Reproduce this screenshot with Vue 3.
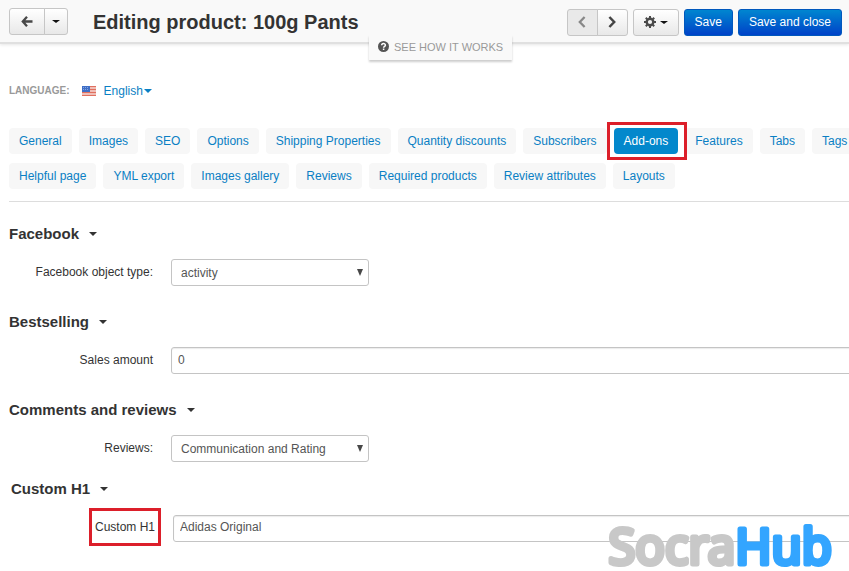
<template>
  <div class="page">
    <header class="actions-bar">
      <div class="btn-group">
        <button type="button" class="btn btn-back" aria-label="Back">
          <svg width="12" height="11" viewBox="0 0 12 11">
            <path d="M6 .8 L1.8 5.5 L6 10.2 M2 5.5 H11.5" fill="none" stroke="#484848" stroke-width="2.3" />
          </svg>
        </button>
        <button type="button" class="btn btn-toggle" aria-label="History"><span class="caret small"></span></button>
      </div>

      <h1 class="title">Editing product: 100g Pants</h1>

      <div class="buttons">
        <div class="btn-group">
          <button type="button" class="btn btn-nav" aria-label="Previous" disabled>
            <svg width="8" height="12" viewBox="0 0 8 12">
              <path d="M6.6 1 L1.8 6 L6.6 11" fill="none" stroke="#888" stroke-width="2.3" />
            </svg>
          </button>
          <button type="button" class="btn btn-nav" aria-label="Next">
            <svg width="8" height="12" viewBox="0 0 8 12">
              <path d="M1.4 1 L6.2 6 L1.4 11" fill="none" stroke="#444" stroke-width="2.5" />
            </svg>
          </button>
        </div>
        <button type="button" class="btn btn-gear" aria-label="Tools">
          <svg width="12" height="12" viewBox="0 0 12 12">
            <circle cx="6" cy="6" r="3.3" fill="none" stroke="#4a4a4a" stroke-width="2.4" />
            <path
              d="M6 0 V2 M6 10 V12 M0 6 H2 M10 6 H12 M1.8 1.8 L3.2 3.2 M8.8 8.8 L10.2 10.2 M10.2 1.8 L8.8 3.2 M3.2 8.8 L1.8 10.2"
              stroke="#4a4a4a"
              stroke-width="2"
            />
          </svg>
          <span class="caret small"></span>
        </button>
        <button type="button" class="btn btn-primary">Save</button>
        <button type="button" class="btn btn-primary">Save and close</button>
      </div>

      <a href="#" class="help-link">
        <svg width="11" height="11" viewBox="0 0 11 11">
          <circle cx="5.5" cy="5.5" r="5.5" fill="#555" />
          <path
            d="M3.7 4.3 C3.7 2 7.4 2 7.4 4.2 C7.4 5.4 5.6 5.4 5.6 6.8 M5.6 7.6 V9"
            fill="none"
            stroke="#fff"
            stroke-width="1.5"
          />
        </svg>
        <span>SEE HOW IT WORKS</span>
      </a>
    </header>

    <main class="content">
      <div class="language">
        <span class="language-label">LANGUAGE:</span>
        <a href="#" class="language-link">
          <svg class="flag" width="14" height="10" viewBox="0 0 14 10">
            <rect width="14" height="10" fill="#f6d9d5" />
            <path d="M0 .5 H14 M0 3.5 H14 M0 6.5 H14 M0 9.5 H14" stroke="#e0705f" stroke-width="1.4" />
            <rect width="8" height="6" fill="#3f6fc6" />
            <path d="M1 1.5 H7 M1 3.5 H7" stroke="#86a6e4" stroke-dasharray="1 1" />
          </svg>
          <span>English</span>
          <span class="caret"></span>
        </a>
      </div>

      <nav class="tabs">
        <a
          v-for="tab in tabs"
          :key="tab"
          href="#"
          class="tab"
          :class="{ active: tab === activeTab }"
          @click.prevent="activeTab = tab"
        >{{ tab }}</a>
      </nav>

      <form class="sections" @submit.prevent>
        <section v-for="s in sections" :key="s.id" class="section" :class="{ custom: s.marked }">
          <h2 class="subheader">{{ s.title }} <span class="caret"></span></h2>
          <div class="control-group">
            <div class="label-cell">
              <label :for="s.id" :class="{ marked: s.marked }">{{ s.label }}</label>
            </div>
            <div v-if="s.options" class="select-wrap">
              <select :id="s.id" v-model="s.value">
                <option v-for="o in s.options" :key="o">{{ o }}</option>
              </select>
              <svg class="select-arrow" width="6" height="7" viewBox="0 0 6 7">
                <path d="M0 0 H6 L3 7 Z" fill="#484848" />
              </svg>
            </div>
            <input v-else :id="s.id" v-model="s.value" type="text" />
          </div>
        </section>
      </form>
    </main>

    <svg class="brand" width="240" height="60" viewBox="0 0 240 60">
      <text x="229" y="53" text-anchor="end"><tspan class="brand-grey">Socra</tspan><tspan class="brand-blue">Hub</tspan></text>
    </svg>
  </div>
</template>

<script setup>
import { ref, reactive } from 'vue'

const tabs = [
  'General', 'Images', 'SEO', 'Options', 'Shipping Properties', 'Quantity discounts',
  'Subscribers', 'Add-ons', 'Features', 'Tabs', 'Tags', 'Helpful page', 'YML export',
  'Images gallery', 'Reviews', 'Required products', 'Review attributes', 'Layouts'
]
const activeTab = ref('Add-ons')

const sections = reactive([
  { id: 'fb_type', title: 'Facebook', label: 'Facebook object type:', value: 'activity', options: ['activity'] },
  { id: 'sales_amount', title: 'Bestselling', label: 'Sales amount', value: '0' },
  {
    id: 'reviews',
    title: 'Comments and reviews',
    label: 'Reviews:',
    value: 'Communication and Rating',
    options: ['Communication and Rating']
  },
  { id: 'custom_h1', title: 'Custom H1', label: 'Custom H1', value: 'Adidas Original', marked: true }
])
</script>

<style>
body {
  margin: 0;
  background: #fff;
}
</style>

<style scoped>
.page {
  position: relative;
  min-height: 100vh;
  overflow: hidden;
  font-family: "Liberation Sans", Arial, sans-serif;
  font-size: 12px;
  line-height: 16px;
  color: #333;
}

.page * {
  box-sizing: border-box;
}

a {
  color: #0a7fc4;
  text-decoration: none;
}

.caret {
  display: inline-block;
  border-top: 4px solid currentColor;
  border-left: 4px solid transparent;
  border-right: 4px solid transparent;
}

.caret.small {
  border-top-width: 3px;
  color: #111;
}

/* top bar */
.actions-bar {
  position: relative;
  display: flex;
  align-items: center;
  height: 44px;
  padding: 0 7px 0 9px;
  background: #f9f9f9;
  border-bottom: 2px solid #e0e0e0;
  box-shadow: 0 1px 3px rgba(0, 0, 0, 0.1);
}

.title {
  flex: 1;
  margin: 0 0 0 25px;
  padding-top: 2px;
  font-size: 20px;
  line-height: 28px;
  font-weight: bold;
  white-space: nowrap;
}

.buttons {
  display: flex;
  gap: 5px;
  padding-top: 2px;
}

.btn-group {
  display: flex;
}

.btn {
  display: flex;
  align-items: center;
  justify-content: center;
  height: 27px;
  padding: 0;
  border: 1px solid #c6c6c6;
  border-radius: 3px;
  background: linear-gradient(#fff, #e8e8e8);
  font: inherit;
}

.btn-group .btn:first-child {
  border-radius: 3px 0 0 3px;
}

.btn-group .btn:last-child {
  margin-left: -1px;
  border-radius: 0 3px 3px 0;
}

.btn:disabled {
  background: #e9e9e9;
}

.btn-back {
  width: 36px;
}

.btn-toggle {
  width: 24px;
}

.btn-nav {
  width: 31px;
}

.btn-gear {
  width: 46px;
  gap: 4px;
}

.btn-primary {
  padding: 0 10px;
  border-color: #0058bd;
  background: linear-gradient(#0086d0, #0042c8);
  color: #fff;
}

.help-link {
  position: absolute;
  left: 369px;
  top: 35px;
  display: flex;
  align-items: center;
  gap: 5px;
  height: 25px;
  padding: 0 9px 2px;
  background: #f9f9f9;
  box-shadow: 0 2px 2px rgba(0, 0, 0, 0.2);
  color: #999;
  font-size: 11px;
  white-space: nowrap;
}

/* language */
.content {
  padding: 38px 0 0 9px;
}

.language {
  display: flex;
  align-items: center;
  height: 18px;
}

.language-label {
  font-size: 10px;
  font-weight: bold;
  color: #999;
}

.language-link {
  display: flex;
  align-items: center;
  margin-left: 12px;
}

.language-link .flag {
  margin-right: 8px;
}

.language-link .caret {
  margin-left: 1px;
}

/* tabs run past the right edge of the window */
.tabs {
  display: flex;
  flex-wrap: wrap;
  gap: 9px 7px;
  margin-right: -36px;
  padding: 28px 0 12px;
  border-bottom: 1px solid #ddd;
}

.tab {
  height: 26px;
  padding: 0 10px;
  border-radius: 4px;
  background: #f7f7f7;
  line-height: 26px;
  white-space: nowrap;
}

.tab.active {
  position: relative;
  z-index: 1;
  background: #0388cc;
  color: #fff;
}

.tab.active::after {
  content: "";
  position: absolute;
  inset: -6px -9px -6px -7px;
  border: 3px solid #dc1f2a;
}

/* form */
.sections {
  margin-right: -20px;
  padding-top: 21px;
}

.section {
  padding-bottom: 25px;
}

.section.custom {
  margin-top: -9px;
  padding-left: 2px;
}

.subheader {
  display: flex;
  align-items: center;
  gap: 10px;
  margin: 0 0 15px;
  font-size: 15px;
  line-height: 21px;
}

.control-group {
  display: flex;
  align-items: center;
  gap: 18px;
}

.label-cell {
  width: 144px;
  padding-bottom: 2px;
  text-align: right;
}

label {
  display: inline-block;
}

label.marked {
  outline: 3px solid #dc1f2a;
  outline-offset: 3px;
  padding: 5px 0;
}

input,
select {
  height: 27px;
  border: 1px solid #c4c4c4;
  border-radius: 3px;
  background: #fff;
  color: #555;
  font: inherit;
}

input {
  flex: 1;
  padding: 0 6px 2px;
  box-shadow: inset 0 1px 1px rgba(0, 0, 0, 0.08);
}

.select-wrap {
  position: relative;
  width: 198px;
}

select {
  display: block;
  width: 100%;
  padding: 0 20px 0 9px;
  appearance: none;
}

.select-arrow {
  position: absolute;
  right: 6px;
  top: 10px;
  pointer-events: none;
}

/* watermark */
.brand {
  position: absolute;
  right: 6px;
  bottom: 0;
  overflow: visible;
  font-family: "Noto Sans", sans-serif;
  font-size: 49px;
  stroke-width: 5px;
  stroke-linejoin: round;
  pointer-events: none;
}

.brand-grey {
  fill: #c8c8c8;
  stroke: #c8c8c8;
}

.brand-blue {
  fill: #33a5ff;
  stroke: #33a5ff;
}
</style>
